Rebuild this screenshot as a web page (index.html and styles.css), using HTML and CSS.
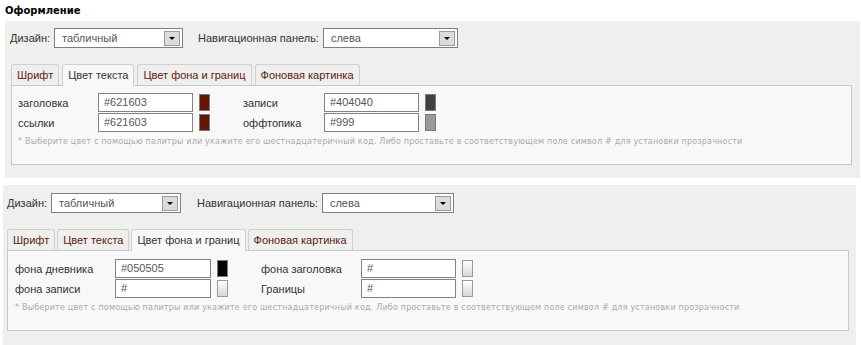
FILE: index.html
```html
<!DOCTYPE html>
<html lang="ru">
<head>
    <meta charset="UTF-8">
    <title>Оформление</title>
    <link rel="stylesheet" href="styles.css">
</head>
<body>
    <div class="title">Оформление</div>

    <div class="box box-first">
        <div class="top-row">
            <span class="lbl">Дизайн:</span>
            <div class="select sel-design"><span>табличный</span><i class="arrow"></i></div>
            <span class="lbl nav-lbl">Навигационная панель:</span>
            <div class="select sel-nav"><span>слева</span><i class="arrow"></i></div>
        </div>
        <div class="tabs">
            <div class="tab">Шрифт</div>
            <div class="tab active">Цвет текста</div>
            <div class="tab">Цвет фона и границ</div>
            <div class="tab">Фоновая картинка</div>
        </div>
        <div class="panel">
            <div class="fields">
                <span class="f-lbl">заголовка</span>
                <span class="inp">#621603</span>
                <span class="sw" style="background:#621603"></span>
                <span class="f-lbl gap">записи</span>
                <span class="inp">#404040</span>
                <span class="sw" style="background:#404040"></span>

                <span class="f-lbl">ссылки</span>
                <span class="inp">#621603</span>
                <span class="sw" style="background:#621603"></span>
                <span class="f-lbl gap">оффтопика</span>
                <span class="inp">#999</span>
                <span class="sw" style="background:#999"></span>
            </div>
            <p class="note">* Выберите цвет с помощью палитры или укажите его шестнадцатеричный код. Либо проставьте в соответствующем поле символ # для установки прозрачности</p>
        </div>
    </div>

    <div class="box box-second">
        <div class="top-row">
            <span class="lbl">Дизайн:</span>
            <div class="select sel-design"><span>табличный</span><i class="arrow"></i></div>
            <span class="lbl nav-lbl">Навигационная панель:</span>
            <div class="select sel-nav"><span>слева</span><i class="arrow"></i></div>
        </div>
        <div class="tabs">
            <div class="tab">Шрифт</div>
            <div class="tab">Цвет текста</div>
            <div class="tab active">Цвет фона и границ</div>
            <div class="tab">Фоновая картинка</div>
        </div>
        <div class="panel">
            <div class="fields wide">
                <span class="f-lbl">фона дневника</span>
                <span class="inp">#050505</span>
                <span class="sw" style="background:#050505"></span>
                <span class="f-lbl gap">фона заголовка</span>
                <span class="inp">#</span>
                <span class="sw empty"></span>

                <span class="f-lbl">фона записи</span>
                <span class="inp">#</span>
                <span class="sw empty"></span>
                <span class="f-lbl gap">Границы</span>
                <span class="inp">#</span>
                <span class="sw empty"></span>
            </div>
            <p class="note">* Выберите цвет с помощью палитры или укажите его шестнадцатеричный код. Либо проставьте в соответствующем поле символ # для установки прозрачности</p>
        </div>
    </div>
</body>
</html>
```

FILE: styles.css
```css
body {
    margin: 0;
    font-family: "Liberation Sans", Arial, sans-serif;
    font-size: 11px;
    color: #222;
    background: #fff;
}
.title {
    font-family: "DejaVu Sans", Verdana, sans-serif;
    font-weight: bold;
    font-size: 10px;
    height: 16px;
    padding: 5px 0 0 5px;
    color: #000;
}
.box {
    background: #efefed;
}
.box-first {
    margin: 0 1px 0 5px;
    padding: 7px 8px 13px 5px;
}
.box-second {
    margin: 7px 5px 0 3px;
    padding: 8px 7px 15px 4px;
}
.top-row {
    display: flex;
    align-items: center;
    height: 20px;
}
.lbl {
    color: #333;
    margin-right: 4px;
    white-space: nowrap;
}
.nav-lbl {
    margin-left: 15px;
}
.select {
    box-sizing: border-box;
    height: 20px;
    border: 1px solid #7f7f7f;
    background: #fff;
    display: flex;
    align-items: center;
    justify-content: space-between;
    padding: 0 2px 0 7px;
    color: #555;
}
.box-first .sel-design { width: 129px; }
.box-first .sel-nav { width: 135px; }
.box-second .sel-design { width: 130px; }
.box-second .sel-nav { width: 132px; }
.box-second .nav-lbl { margin-left: 16px; }
.arrow {
    width: 14px;
    height: 13px;
    border: 1px solid #9a9a9a;
    background: #dcdcdc;
    position: relative;
}
.arrow::after {
    content: "";
    position: absolute;
    left: 4px;
    top: 5px;
    border-left: 3px solid transparent;
    border-right: 3px solid transparent;
    border-top: 3px solid #000;
}
.tabs {
    display: flex;
    gap: 3px;
    margin: 16px 0 0 1px;
    height: 21px;
}
.box-second .tabs {
    margin-left: 0;
    gap: 2px;
}
.tab {
    box-sizing: border-box;
    height: 21px;
    border: 1px solid #cfcfcf;
    border-bottom: none;
    border-radius: 3px 3px 0 0;
    padding: 0 5px;
    line-height: 21px;
    white-space: nowrap;
    color: #5c1a10;
    background: #efefed;
}
.tab.active {
    height: 22px;
    background: #f8f8f8;
    color: #333;
    position: relative;
    z-index: 1;
}
.panel {
    box-sizing: border-box;
    margin-left: 1px;
    border: 1px solid #c8c8c8;
    background: #f8f8f8;
    height: 80px;
    padding: 7px 6px 0;
}
.box-second .panel {
    margin-left: 0;
    padding: 8px 7px 0;
    height: 81px;
}
.fields {
    display: grid;
    grid-template-columns: 80px 95px 17px 114px 95px 17px;
    row-gap: 1px;
    align-items: center;
}
.fields.wide {
    grid-template-columns: 100px 96px 17px 133px 95px 17px;
}
.fields .sw { margin-left: 6px; }
.fields .gap { margin-left: 33px; }
.f-lbl {
    color: #333;
    white-space: nowrap;
}
.inp {
    height: 17px;
    border: 1px solid #8a8276;
    background: #fff;
    color: #555;
    padding-left: 5px;
    line-height: 17px;
}
.sw {
    box-sizing: border-box;
    width: 11px;
    height: 17px;
    border: 1px solid #7a7a7a;
}
.sw.empty {
    border-color: #999;
    background: linear-gradient(#fff, #d8d6d2);
}
.note {
    margin: 5px 0 0;
    font-family: "DejaVu Sans", Verdana, sans-serif;
    color: #aaa;
    font-size: 8px;
    letter-spacing: 0.2px;
    white-space: nowrap;
}
```
